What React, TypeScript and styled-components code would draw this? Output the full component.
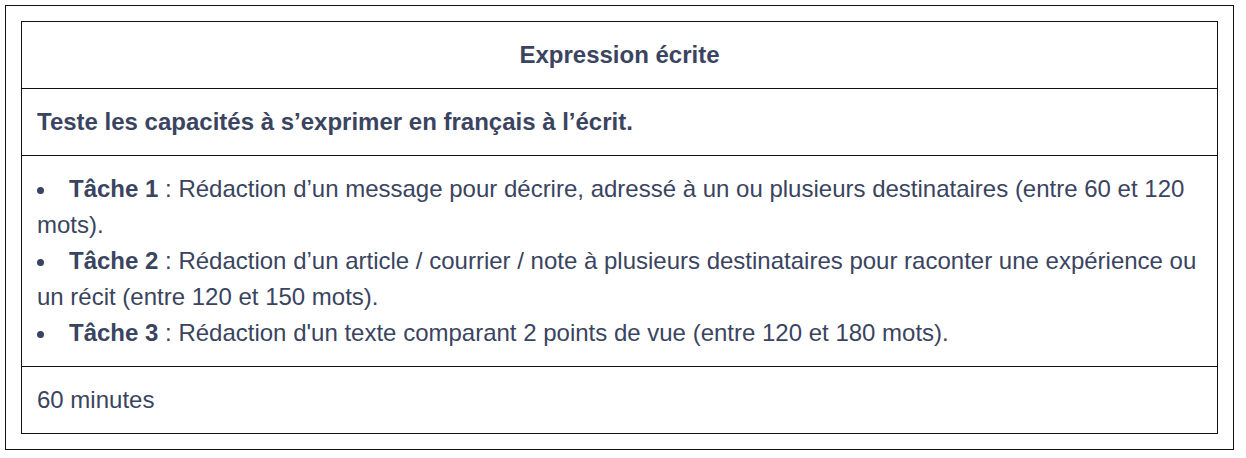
import React from "react";
import styled, { createGlobalStyle } from "styled-components";

const GlobalStyle = createGlobalStyle`
  html, body { margin: 0; padding: 0; background: #ffffff; }
  body {
    font-family: "Liberation Sans", Arial, Helvetica, sans-serif;
    color: #3a4460;
  }
`;

const Frame = styled.div`
  box-sizing: border-box;
  width: 1229px;
  margin: 5px 0 0 5px;
  padding: 15px;
  border: 1px solid #111;
`;

const Table = styled.table`
  width: 100%;
  border-collapse: collapse;
  font-size: 24px;
  line-height: 36px;
  color: #3a4460;
`;

const Cell = styled.td<{ $center?: boolean; $bold?: boolean }>`
  border: 1px solid #111;
  padding: 15px;
  text-align: ${(p) => (p.$center ? "center" : "left")};
  font-weight: ${(p) => (p.$bold ? 700 : 400)};
  vertical-align: top;
`;

const Item = styled.div`
  display: block;
`;

const Bullet = styled.span`
  display: inline-block;
  width: 7px;
  height: 7px;
  margin-right: 25px;
  border-radius: 50%;
  background: currentColor;
  vertical-align: 3px;
`;

const Strong = styled.strong`
  font-weight: 700;
`;

const tasks = [
  {
    n: "Tâche 1",
    text: " : Rédaction d’un message pour décrire, adressé à un ou plusieurs destinataires (entre 60 et 120 mots).",
  },
  {
    n: "Tâche 2",
    text: " : Rédaction d’un article / courrier / note à plusieurs destinataires pour raconter une expérience ou un récit (entre 120 et 150 mots).",
  },
  {
    n: "Tâche 3",
    text: " : Rédaction d'un texte comparant 2 points de vue (entre 120 et 180 mots).",
  },
];

export default function App() {
  return (
    <>
      <GlobalStyle />
      <Frame>
        <Table>
          <tbody>
            <tr>
              <Cell $center $bold>Expression écrite</Cell>
            </tr>
            <tr>
              <Cell $bold>Teste les capacités à s’exprimer en français à l’écrit.</Cell>
            </tr>
            <tr>
              <Cell>
                {tasks.map((t) => (
                  <Item key={t.n}>
                    <Bullet aria-hidden="true" />
                    <Strong>{t.n}</Strong>
                    {t.text}
                  </Item>
                ))}
              </Cell>
            </tr>
            <tr>
              <Cell>60 minutes</Cell>
            </tr>
          </tbody>
        </Table>
      </Frame>
    </>
  );
}
